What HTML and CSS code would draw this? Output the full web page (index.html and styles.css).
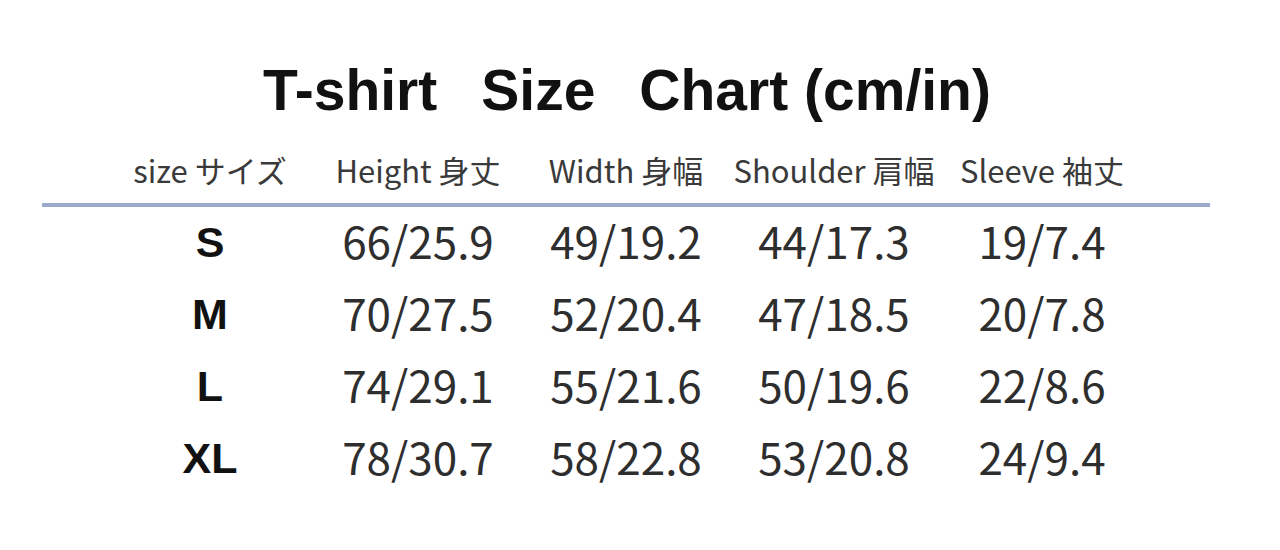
FILE: index.html
```html
<!DOCTYPE html>
<html lang="ja">
<head>
<meta charset="utf-8">
<title>T-shirt Size Chart</title>
<link rel="stylesheet" href="styles.css">
</head>
<body>
<main class="chart">
  <h1 class="title"><span class="word">T-shirt</span><span class="word">Size</span><span class="word">Chart (cm/in)</span></h1>
  <div class="table">
    <div class="row head">
      <div class="cell">size サイズ</div>
      <div class="cell">Height 身丈</div>
      <div class="cell">Width 身幅</div>
      <div class="cell">Shoulder 肩幅</div>
      <div class="cell">Sleeve 袖丈</div>
    </div>
    <div class="rule"></div>
    <div class="row body">
      <div class="cell size">S</div>
      <div class="cell">66/25.9</div>
      <div class="cell">49/19.2</div>
      <div class="cell">44/17.3</div>
      <div class="cell">19/7.4</div>
    </div>
    <div class="row body">
      <div class="cell size">M</div>
      <div class="cell">70/27.5</div>
      <div class="cell">52/20.4</div>
      <div class="cell">47/18.5</div>
      <div class="cell">20/7.8</div>
    </div>
    <div class="row body">
      <div class="cell size">L</div>
      <div class="cell">74/29.1</div>
      <div class="cell">55/21.6</div>
      <div class="cell">50/19.6</div>
      <div class="cell">22/8.6</div>
    </div>
    <div class="row body">
      <div class="cell size">XL</div>
      <div class="cell">78/30.7</div>
      <div class="cell">58/22.8</div>
      <div class="cell">53/20.8</div>
      <div class="cell">24/9.4</div>
    </div>
  </div>
</main>
</body>
</html>
```
FILE: styles.css
```css
html, body {
  margin: 0;
  padding: 0;
  background: #ffffff;
}

.chart {
  width: 1168px;
  margin-left: 42px;
  padding-top: 55px;
  color: #1a1a1a;
}

.title {
  margin: 0;
  height: 70px;
  line-height: 70px;
  display: flex;
  justify-content: center;
  gap: 44px;
  padding-left: 2px;
  font-family: "Liberation Sans", Arial, sans-serif;
  font-weight: bold;
  font-size: 57px;
  color: #111111;
  white-space: nowrap;
}

.table {
  display: flex;
  flex-direction: column;
}

.row {
  display: grid;
  grid-template-columns: repeat(5, 208px);
  padding: 0 64px;
}

.cell {
  text-align: center;
  white-space: nowrap;
}

.head {
  margin-top: 11px;
  height: 67px;
  align-items: center;
  font-family: "Noto Sans CJK JP", sans-serif;
  font-size: 31px;
  color: #3a3a3a;
  line-height: 40px;
}

.rule {
  height: 4px;
  background: #9cabcc;
}

.body {
  box-sizing: border-box;
  height: 72px;
  padding-bottom: 6px;
  align-items: center;
  font-family: "Noto Sans CJK JP", sans-serif;
  font-size: 44px;
  color: #2e2e2e;
  line-height: 50px;
}

.size {
  padding-top: 3px;
  font-family: "Liberation Sans", Arial, sans-serif;
  font-weight: bold;
  font-size: 43px;
  color: #111111;
}
```
